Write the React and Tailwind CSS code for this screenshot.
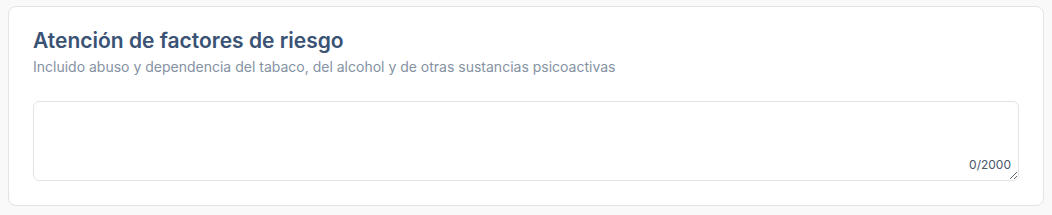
import React, { useState } from "react";

const MAX = 2000;

const RiskFactorsCard = () => {
  const [text, setText] = useState("");

  return (
    <div className="rounded-lg border border-[#e3e3e3] bg-white px-6 pt-5 pb-6">
      <h2 className="text-[21px] font-semibold leading-7 text-[#3a5274]">Atención de factores de riesgo</h2>
      <p className="mt-0.5 text-sm leading-5 text-[#8592a3]">
        Incluido abuso y dependencia del tabaco, del alcohol y de otras sustancias psicoactivas
      </p>

      <div className="relative mt-6">
        <textarea
          className="block h-20 w-full rounded-md border border-[#e3e3e3] bg-white px-3 py-2 text-sm text-[#34496a] outline-none"
          value={text}
          maxLength={MAX}
          onChange={(e) => setText(e.target.value)}
        />
        <span className="pointer-events-none absolute right-2 bottom-2 text-xs leading-4 text-[#4b5668]">
          {text.length}/{MAX}
        </span>
      </div>
    </div>
  );
};

export default function App() {
  return (
    <div className="min-h-[215px] bg-[#f9f9f9] px-2 pt-1.5 pb-2.5 font-['Inter',sans-serif]">
      <RiskFactorsCard />
    </div>
  );
}
